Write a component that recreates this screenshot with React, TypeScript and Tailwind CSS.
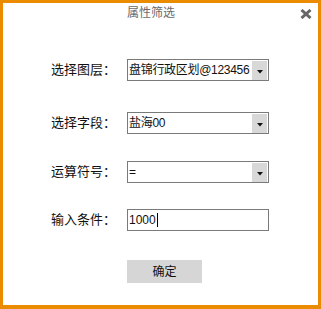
const font = "font-['Liberation_Sans','Noto_Sans_CJK_SC',sans-serif]";

function Caret() {
  return (
    <div className="mr-px flex h-[19px] w-[15px] shrink-0 items-center justify-center bg-[#d8d8d8]">
      <svg width="6" height="4" viewBox="0 0 6 4" className="mt-[3px]">
        <path d="M0 0 H6 L3 3.5 Z" fill="#111" />
      </svg>
    </div>
  );
}

function Combo({ value }: { value: string }) {
  return (
    <div className="flex h-[22px] w-[142px] items-center border border-[#7a7a7a] bg-white">
      <span className="flex-1 overflow-hidden whitespace-nowrap pl-px text-[12px] leading-[16px] tracking-[-0.3px] text-[#111]">
        {value}
      </span>
      <Caret />
    </div>
  );
}

function Row({ label, children, className }: { label: string; children: React.ReactNode; className?: string }) {
  return (
    <div className={`flex items-center pl-[48px] ${className ?? ""}`}>
      <span className="w-[76px] text-[13px] leading-[16px] text-[#111]">{label}</span>
      {children}
    </div>
  );
}

export default function App() {
  return (
    <div className={`h-[309px] w-[321px] border-[3px] border-b-[4px] border-[#ea8b00] bg-white ${font}`}>
      <div className="flex h-[20px] items-center">
        <span className="pl-[124px] text-[12px] leading-[16px] text-[#6b6b6b]">属性筛选</span>
        <div className="flex-1" />
        <svg width="12" height="10" viewBox="0 0 12 10" className="mr-[6px] mt-[1px]">
          <path d="M1.5 1 L10.5 9 M10.5 1 L1.5 9" stroke="#666" strokeWidth="3" />
        </svg>
      </div>

      <Row label="选择图层：" className="mt-[36px]">
        <Combo value="盘锦行政区划@123456" />
      </Row>
      <Row label="选择字段：" className="mt-[31px]">
        <Combo value="盐海00" />
      </Row>
      <Row label="运算符号：" className="mt-[27px]">
        <Combo value="=" />
      </Row>
      <Row label="输入条件：" className="mt-[26px]">
        <div className="flex h-[22px] w-[142px] items-center border border-[#7a7a7a] bg-white pl-px">
          <span className="text-[12px] leading-[16px] text-[#111]">1000</span>
          <span className="ml-px h-[14px] w-px bg-black" />
        </div>
      </Row>

      <div className="mt-[29px] pl-[124px]">
        <button className="flex h-[23px] w-[75px] items-center justify-center bg-[#d6d6d6] text-[12px] leading-[16px] text-[#111]">
          确定
        </button>
      </div>
    </div>
  );
}
